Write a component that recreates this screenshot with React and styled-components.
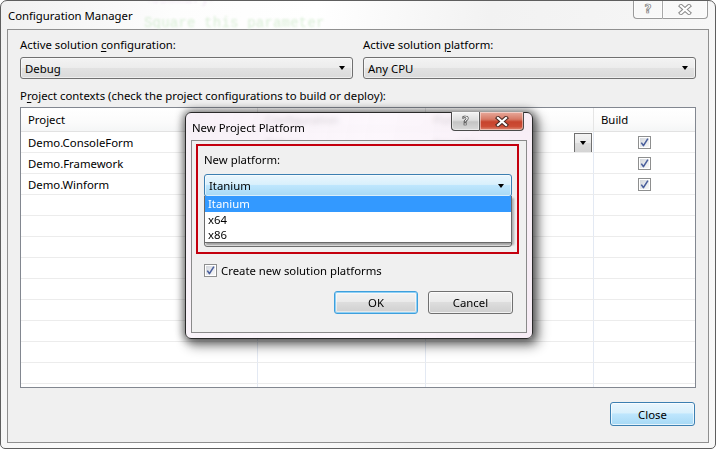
import React from "react";
import styled, { createGlobalStyle } from "styled-components";

const FONT = `"Noto Sans", "Open Sans", sans-serif`;
const FS = 11.35;

const Global = createGlobalStyle`
  html, body { margin: 0; padding: 0; background: #ffffff; }
  body { font-family: ${FONT}; font-size: ${FS}px; color: #000; }
  * { box-sizing: border-box; }
`;

const blueGrad = `linear-gradient(#eaf6fd 0%, #d9f0fc 45%, #bee6fd 50%, #a7d9f5 100%)`;
const grayGrad = `linear-gradient(#f2f2f2 0%, #ebebeb 45%, #dddddd 50%, #cfcfcf 100%)`;
const redGrad = `linear-gradient(#e8aa9c 0%, #d77a66 40%, #c7432d 55%, #cc4c35 80%, #de8a75 100%)`;

const Window = styled.div`
  position: relative;
  width: 716px;
  height: 449px;
  border: 1px solid #5e5e5e;
  border-radius: 7px 7px 5px 5px;
  overflow: hidden;
  display: flex;
  flex-direction: column;
  background: linear-gradient(100deg, #f1f1f1 0%, #fdfdfd 22%, #ffffff 40%, #f2f2f2 62%, #f8f8f8 100%);
`;

const TitleBar = styled.div`
  position: relative;
  height: 28px;
  display: flex;
  align-items: center;
  padding: 0 7px 0 7px;
  flex-shrink: 0;
`;

const Backdrop = styled.div`
  position: absolute;
  left: 0;
  top: 0;
  width: 100%;
  height: 100%;
  overflow: hidden;
  pointer-events: none;
  font-family: "Liberation Mono", monospace;
  filter: blur(1px);
`;

const GhostText = styled.span`
  position: absolute;
  left: ${(p) => p.$x}px;
  top: ${(p) => p.$y}px;
  font-size: ${(p) => p.$size}px;
  color: ${(p) => p.$color};
  white-space: pre;
  letter-spacing: ${(p) => p.$ls || 0}px;
`;

const TitleText = styled.div`
  position: relative;
  font-size: ${FS}px;
  flex: 1;
  padding-top: 1px;
`;

const CaptionGroup = styled.div`
  position: relative;
  display: flex;
  align-self: flex-start;
  margin-top: -1px;
`;

const CaptionBtn = styled.div`
  width: ${(p) => p.$w}px;
  height: ${(p) => p.$h}px;
  display: flex;
  align-items: center;
  justify-content: center;
  border: 1px solid ${(p) => (p.$active ? "#4a4a4a" : "#9a9a9a")};
  border-top: none;
  border-radius: ${(p) => (p.$first ? "0 0 0 4px" : "0 0 4px 0")};
  ${(p) => (p.$first ? "border-right: none;" : "")}
  background: ${(p) =>
    p.$variant === "close"
      ? redGrad
      : p.$active
      ? "linear-gradient(#f4f4f4 0%, #dedede 45%, #c4c4c4 55%, #d8d8d8 100%)"
      : "rgba(255,255,255,0.35)"};
  box-shadow: ${(p) => (p.$active ? "inset 0 0 0 1px rgba(255,255,255,0.45)" : "inset 0 0 0 1px rgba(255,255,255,0.6)")};
  ${(p) => (!p.$first ? "border-left: 1px solid " + (p.$active ? "#5a5a5a" : "#a8a8a8") + ";" : "")}
`;

const QGlyph = styled.span`
  font-family: "DejaVu Sans", sans-serif;
  font-weight: bold;
  font-size: 12px;
  line-height: 1;
  color: ${(p) => p.$fill};
  -webkit-text-stroke: 0.7px ${(p) => p.$stroke};
  margin-top: -1px;
`;

const XIcon = ({ fill, stroke }) => (
  <svg width="14" height="11" viewBox="0 0 14 11">
    <path d="M3 2 L11 9 M11 2 L3 9" stroke={stroke} strokeWidth="4.2" strokeLinecap="square" fill="none" />
    <path d="M3 2 L11 9 M11 2 L3 9" stroke={fill} strokeWidth="2.2" strokeLinecap="square" fill="none" />
  </svg>
);

const Client = styled.div`
  flex: 1;
  margin: 0 6px 5px 6px;
  border: 1px solid #8f8f8f;
  background: #f0f0f0;
  padding: 7px 12px 0 12px;
  display: flex;
  flex-direction: column;
`;

const TopRow = styled.div`
  display: grid;
  grid-template-columns: 333px 333px;
  column-gap: 10px;
`;

const Field = styled.div`
  display: flex;
  flex-direction: column;
`;

const Label = styled.div`
  font-size: ${FS}px;
  line-height: 16px;
  height: 16px;
  margin-top: ${(p) => p.$mt || 0}px;
  white-space: nowrap;
  u { text-decoration: underline; text-underline-offset: 2px; }
`;

const Combo = styled.div`
  position: relative;
  height: ${(p) => p.$h || 22}px;
  margin-top: ${(p) => p.$mt || 0}px;
  border: 1px solid ${(p) => (p.$hot ? "#3c7fb1" : "#707070")};
  border-radius: 3px;
  background: ${(p) => (p.$hot ? blueGrad : "linear-gradient(#f3f3f3 0%, #ececec 50%, #e2e2e2 51%, #dadada 100%)")};
  box-shadow: inset 0 0 0 1px rgba(255,255,255,0.55);
  display: flex;
  align-items: center;
  padding: 0 7px 0 4px;
  font-size: ${FS}px;
`;

const ComboText = styled.span`
  flex: 1;
  white-space: nowrap;
`;

const Arrow = styled.span`
  width: 0;
  height: 0;
  border-left: 3.5px solid transparent;
  border-right: 3.5px solid transparent;
  border-top: 4px solid #000;
`;

const Grid = styled.div`
  margin-top: 3px;
  height: 281px;
  border: 1px solid #828790;
  background: #fff;
  display: flex;
  flex-direction: column;
  overflow: hidden;
`;

const COLS = "237px 168px 168px 1fr";

const HeaderRow = styled.div`
  display: grid;
  grid-template-columns: ${COLS};
  height: 24px;
  flex-shrink: 0;
  background: linear-gradient(#ffffff 0%, #fbfbfb 60%, #f4f5f6 100%);
`;

const HeaderCell = styled.div`
  border-right: 1px solid #e5e5e5;
  border-bottom: 1px solid #e2e2e2;
  padding-left: 7px;
  font-size: ${FS}px;
  line-height: 23px;
  &:last-child { border-right: none; }
`;

const Body = styled.div`
  flex: 1;
  overflow: hidden;
`;

const Row = styled.div`
  display: grid;
  grid-template-columns: ${COLS};
  height: 21px;
`;

const Cell = styled.div`
  display: flex;
  align-items: center;
  justify-content: ${(p) => (p.$center ? "center" : "flex-start")};
  border-right: 1px solid #e3e9f3;
  border-bottom: 1px solid #ececec;
  padding-left: ${(p) => (p.$center ? 0 : 7)}px;
  font-size: ${FS}px;
  white-space: nowrap;
  overflow: hidden;
  &:last-child { border-right: none; }
`;

const CellText = styled.span`
  flex: ${(p) => (p.$grow ? 1 : "none")};
`;

const DropBtn = styled.div`
  width: 18px;
  height: 20px;
  margin-right: 1px;
  margin-top: 1px;
  border: 1px solid #707070;
  background: linear-gradient(#f4f4f4 0%, #e9e9e9 50%, #dcdcdc 51%, #d4d4d4 100%);
  display: flex;
  align-items: center;
  justify-content: center;
`;

const CheckBox = styled.div`
  width: 13px;
  height: 13px;
  border: 1px solid #8e8f8f;
  background: #fff;
  padding: 1px;
  flex-shrink: 0;
  display: flex;
`;

const CheckInner = styled.div`
  flex: 1;
  background: linear-gradient(135deg, #d2d6dc 0%, #e8eaed 55%, #f7f7f7 100%);
  position: relative;
`;

const CheckMark = styled.svg`
  position: absolute;
  left: -1px;
  top: -1px;
`;

const Check = () => (
  <CheckBox>
    <CheckInner>
      <CheckMark width="11" height="11" viewBox="0 0 11 11">
        <path d="M2.3 5.6 L4.4 8.6 L8.9 1.6" stroke="#4a5f9c" strokeWidth="1.6" fill="none" strokeLinejoin="round" />
      </CheckMark>
    </CheckInner>
  </CheckBox>
);

const Footer = styled.div`
  display: flex;
  justify-content: flex-end;
  margin-top: 14px;
  padding-right: 1px;
`;

const Button = styled.div`
  width: ${(p) => p.$w}px;
  height: ${(p) => p.$h || 23}px;
  border: 1px solid ${(p) => (p.$kind === "hot" ? "#3c7fb1" : p.$kind === "default" ? "#3e9fdc" : "#707070")};
  border-radius: 3px;
  background: ${(p) => (p.$kind === "hot" ? blueGrad : grayGrad)};
  box-shadow: ${(p) =>
    p.$kind === "default"
      ? "inset 0 0 0 1px #8fd0f5, inset 0 0 0 2px rgba(255,255,255,0.5)"
      : "inset 0 0 0 1px rgba(255,255,255,0.7)"};
  display: flex;
  align-items: center;
  justify-content: center;
  font-size: ${FS}px;
`;

/* ---------- modal ---------- */

const Modal = styled.div`
  position: absolute;
  left: 184px;
  top: 111px;
  width: 348px;
  height: 227px;
  border: 1px solid #2a2a2a;
  border-radius: 6px;
  display: flex;
  flex-direction: column;
  background: linear-gradient(100deg, rgba(246,238,246,0.82) 0%, rgba(252,246,252,0.86) 50%, rgba(246,234,244,0.88) 100%);
  backdrop-filter: blur(2.5px);
  box-shadow: 0 0 9px 2px rgba(0,0,0,0.45), 4px 5px 12px 2px rgba(0,0,0,0.45);
  z-index: 5;
`;

const ModalTitle = styled.div`
  height: 27px;
  display: flex;
  align-items: center;
  padding: 0 8px 0 6px;
  flex-shrink: 0;
`;

const ModalClient = styled.div`
  flex: 1;
  margin: 0 5px 5px 5px;
  border: 1px solid #8a8a8a;
  background: #f0f0f0;
  padding: 3px 13px 0 4px;
  display: flex;
  flex-direction: column;
`;

const RedBox = styled.div`
  width: 323px;
  height: 110px;
  border: 2px solid #c4000e;
  padding: 6px 5px 0 6px;
  display: flex;
  flex-direction: column;
`;

const ListBox = styled.div`
  position: absolute;
  left: -1px;
  top: 100%;
  width: calc(100% + 2px);
  background: #fff;
  border: 1px solid #6a6a6a;
  border-top: none;
  box-shadow: 2px 2px 2px rgba(0,0,0,0.28);
  z-index: 3;
`;

const ListItem = styled.div`
  height: 15px;
  line-height: 15px;
  padding-left: 3px;
  font-size: ${FS}px;
  background: ${(p) => (p.$selected ? "#3399ff" : "transparent")};
  color: ${(p) => (p.$selected ? "#fff" : "#000")};
  &:first-child { height: 16px; line-height: 16px; }
`;

const CheckRow = styled.div`
  display: flex;
  align-items: center;
  gap: 4px;
  height: 16px;
  margin-top: 8px;
  padding-left: 8px;
  font-size: ${FS}px;
`;

const ButtonRow = styled.div`
  display: flex;
  justify-content: flex-end;
  gap: 10px;
  margin-top: 13px;
`;

const rows = [
  { name: "Demo.ConsoleForm", config: "Debug", platform: "Any CPU", build: true, editing: true },
  { name: "Demo.Framework", config: "Debug", platform: "Any CPU", build: true },
  { name: "Demo.Winform", config: "Debug", platform: "Any CPU", build: true },
];
while (rows.length < 13) rows.push({});

export default function App() {
  return (
    <>
      <Global />
      <Window>
        <TitleBar>
          <Backdrop>
            <GhostText $x={142} $y={-9} $size={13} $color="#f0e4f4" $ls={0.5}>{"<summary>"}</GhostText>
            <GhostText $x={143} $y={14} $size={14} $color="#d9eed6" $ls={0.2}>{"Square this parameter"}</GhostText>
          </Backdrop>
          <TitleText>Configuration Manager</TitleText>
          <CaptionGroup>
            <CaptionBtn $w={29} $h={19} $first>
              <QGlyph $fill="rgba(255,255,255,0.9)" $stroke="#7a7a7a">?</QGlyph>
            </CaptionBtn>
            <CaptionBtn $w={46} $h={19}>
              <XIcon fill="#ffffff" stroke="#8c8c8c" />
            </CaptionBtn>
          </CaptionGroup>
        </TitleBar>

        <Client>
          <TopRow>
            <Field>
              <Label>Active solution <u>c</u>onfiguration:</Label>
              <Combo $mt={4}>
                <ComboText>Debug</ComboText>
                <Arrow />
              </Combo>
            </Field>
            <Field>
              <Label>Active solution <u>p</u>latform:</Label>
              <Combo $mt={4}>
                <ComboText>Any CPU</ComboText>
                <Arrow />
              </Combo>
            </Field>
          </TopRow>
          <Label $mt={9}>
            P<u>r</u>oject contexts (check the project configurations to build or deploy):
          </Label>
          <Grid>
            <HeaderRow>
              <HeaderCell>Project</HeaderCell>
              <HeaderCell>Configuration</HeaderCell>
              <HeaderCell>Platform</HeaderCell>
              <HeaderCell>Build</HeaderCell>
            </HeaderRow>
            <Body>
              {rows.map((r, i) => (
                <Row key={i}>
                  <Cell>{r.name || ""}</Cell>
                  <Cell>{r.config || ""}</Cell>
                  <Cell>
                    <CellText $grow>{r.platform || ""}</CellText>
                    {r.editing && (
                      <DropBtn>
                        <Arrow />
                      </DropBtn>
                    )}
                  </Cell>
                  <Cell $center>{r.build ? <Check /> : null}</Cell>
                </Row>
              ))}
            </Body>
          </Grid>
          <Footer>
            <Button $w={85} $h={24} $kind="hot">Close</Button>
          </Footer>
        </Client>

        <Modal>
          <ModalTitle>
            <TitleText>New Project Platform</TitleText>
            <CaptionGroup>
              <CaptionBtn $w={28} $h={19} $first $active>
                <QGlyph $fill="#ffffff" $stroke="#3c3c3c">?</QGlyph>
              </CaptionBtn>
              <CaptionBtn $w={45} $h={19} $active $variant="close">
                <XIcon fill="#ffffff" stroke="#4a2a24" />
              </CaptionBtn>
            </CaptionGroup>
          </ModalTitle>
          <ModalClient>
            <RedBox>
              <Label>New platform:</Label>
              <Combo $mt={6} $h={23} $hot>
                <ComboText>Itanium</ComboText>
                <Arrow />
                <ListBox>
                  <ListItem $selected>Itanium</ListItem>
                  <ListItem>x64</ListItem>
                  <ListItem>x86</ListItem>
                </ListBox>
              </Combo>
              <Label $mt={6}>Copy settings from:</Label>
              <Combo $mt={5} $h={23}>
                <ComboText>Any CPU</ComboText>
                <Arrow />
              </Combo>
            </RedBox>
            <CheckRow>
              <Check />
              <span>Create new solution platforms</span>
            </CheckRow>
            <ButtonRow>
              <Button $w={84} $kind="default">OK</Button>
              <Button $w={85}>Cancel</Button>
            </ButtonRow>
          </ModalClient>
        </Modal>
      </Window>
    </>
  );
}
